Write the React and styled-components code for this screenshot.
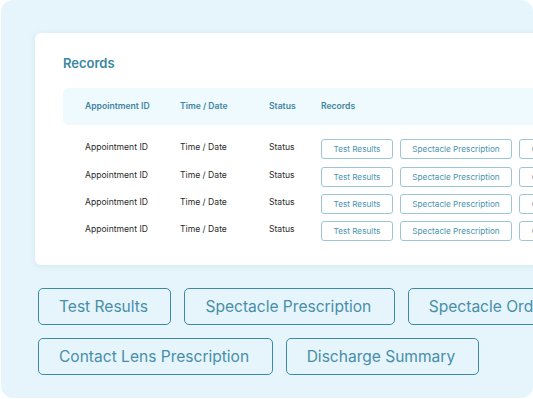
import React from "react";
import styled, { createGlobalStyle } from "styled-components";

const Global = createGlobalStyle`
  html, body { margin: 0; padding: 0; background: #ffffff; }
  body { font-family: Inter, "Noto Sans", sans-serif; }
  * { box-sizing: border-box; }
`;

const Panel = styled.div`
  margin-left: 1px;
  width: 532px;
  height: 398px;
  background: #e6f5fb;
  border-radius: 12px;
  overflow: hidden;
  padding: 33px 0 0 34px;
`;

const Card = styled.div`
  width: 520px;
  height: 232px;
  background: #ffffff;
  border-radius: 6px 0 0 6px;
  box-shadow: 0 1px 6px rgba(120, 170, 200, 0.18);
  padding: 21px 0 0 28px;
  overflow: hidden;
`;

const Title = styled.h2`
  margin: 0;
  font-size: 13px;
  line-height: 18px;
  font-weight: 600;
  color: #3b86a3;
`;

const HeaderRow = styled.div`
  margin-top: 16px;
  height: 36.5px;
  background: #effaff;
  border-radius: 5px 0 0 5px;
  display: flex;
  align-items: center;
  padding-left: 22px;
`;

const HeadCell = styled.div`
  width: ${(p) => p.$w}px;
  flex: none;
  font-size: 8.6px;
  font-weight: 600;
  color: #3f84a0;
  white-space: nowrap;
`;

const Rows = styled.div`
  display: flex;
  flex-direction: column;
  gap: 7px;
  padding: 14.8px 0 0 22px;
`;

const Row = styled.div`
  display: flex;
  align-items: flex-start;
  height: 20.3px;
`;

const Cell = styled.div`
  width: ${(p) => p.$w}px;
  flex: none;
  font-size: 8.6px;
  line-height: 11px;
  padding-top: 3px;
  color: #2a2a2a;
  white-space: nowrap;
`;

const Btns = styled.div`
  display: flex;
  gap: 7px;
  flex: none;
`;

const SmallBtn = styled.div`
  flex: none;
  height: 20px;
  padding: 0 11.5px;
  display: flex;
  align-items: center;
  border: 1px solid #9cc6d6;
  border-radius: 3px;
  font-size: 8.2px;
  color: #4a93ae;
  white-space: nowrap;
`;

const BigArea = styled.div`
  display: flex;
  flex-direction: column;
  gap: 13.5px;
  margin-top: 22.5px;
  margin-left: 3px;
`;

const BigRow = styled.div`
  display: flex;
  gap: 13px;
  width: 600px;
`;

const BigBtn = styled.div`
  flex: none;
  height: 37px;
  padding: 0 22.5px 0 20px;
  display: flex;
  align-items: center;
  border: 1px solid #3d8aa8;
  border-radius: 5px;
  font-size: 15.55px;
  color: #488ea9;
  white-space: nowrap;
`;

const columns = [95, 89, 52];

export default function App() {
  const rows = [0, 1, 2, 3];
  return (
    <>
      <Global />
      <Panel>
        <Card>
          <Title>Records</Title>
          <HeaderRow>
            <HeadCell $w={columns[0]}>Appointment ID</HeadCell>
            <HeadCell $w={columns[1]}>Time / Date</HeadCell>
            <HeadCell $w={columns[2]}>Status</HeadCell>
            <HeadCell $w={60}>Records</HeadCell>
          </HeaderRow>
          <Rows>
            {rows.map((r) => (
              <Row key={r}>
                <Cell $w={columns[0]}>Appointment ID</Cell>
                <Cell $w={columns[1]}>Time / Date</Cell>
                <Cell $w={columns[2]}>Status</Cell>
                <Btns>
                  <SmallBtn>Test Results</SmallBtn>
                  <SmallBtn>Spectacle Prescription</SmallBtn>
                  <SmallBtn>Contact Lens Prescription</SmallBtn>
                </Btns>
              </Row>
            ))}
          </Rows>
        </Card>
        <BigArea>
          <BigRow>
            <BigBtn>Test Results</BigBtn>
            <BigBtn>Spectacle Prescription</BigBtn>
            <BigBtn>Spectacle Order</BigBtn>
          </BigRow>
          <BigRow>
            <BigBtn>Contact Lens Prescription</BigBtn>
            <BigBtn>Discharge Summary</BigBtn>
          </BigRow>
        </BigArea>
      </Panel>
    </>
  );
}
